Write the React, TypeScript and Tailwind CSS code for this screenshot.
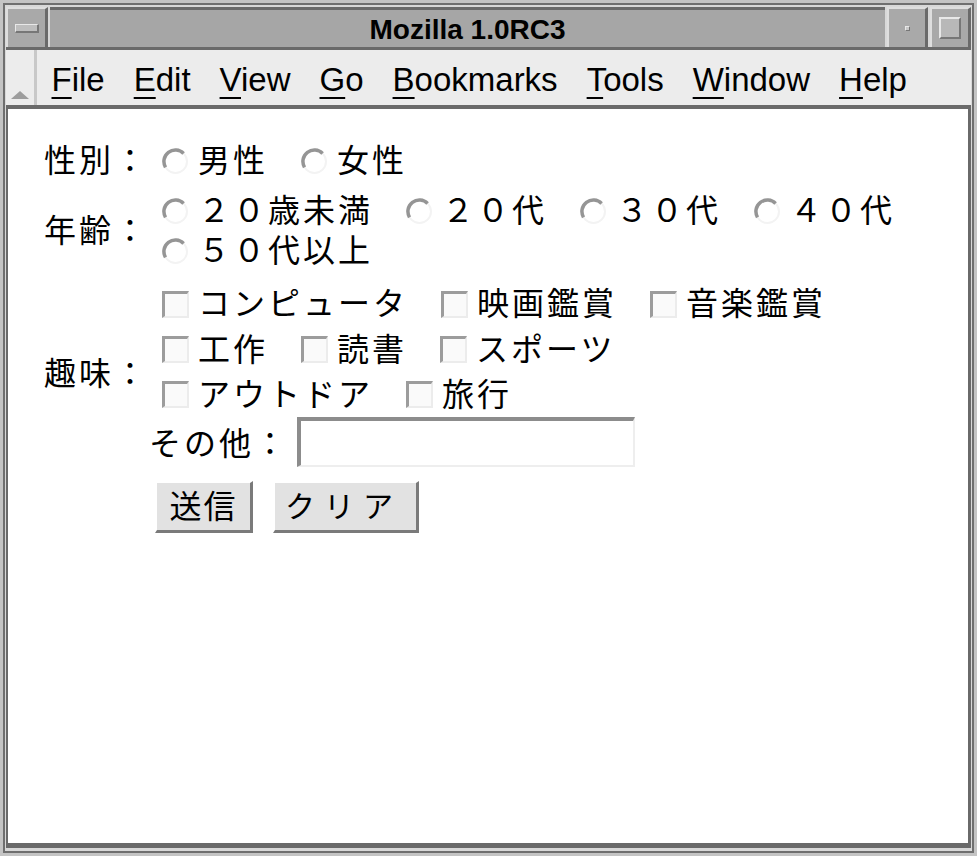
import React from "react";

const fontStack = "font-['Liberation_Sans','Noto_Sans_CJK_JP',sans-serif]";

function Radio() {
    return (
        <svg width="27" height="27" viewBox="0 0 27 27" className="shrink-0">
            <circle cx="13.5" cy="13.5" r="11.5" fill="#ffffff" stroke="#f3f3f3" strokeWidth="2" />
            <path d="M3.5 19.3 A11.5 11.5 0 0 1 21.6 5.4" fill="none" stroke="#959595" strokeWidth="3.5" />
        </svg>
    );
}

function Checkbox() {
    return (
        <span className="box-border block h-[27px] w-[27px] shrink-0 border-t-[3px] border-l-[3px] border-b-2 border-r-2 border-t-[#9c9c9c] border-l-[#9c9c9c] border-b-[#ececec] border-r-[#ececec] bg-[#fafafa]" />
    );
}

function Option({ kind, label, first }: { kind: "radio" | "check"; label: string; first?: boolean }) {
    return (
        <span className={`flex items-center ${first ? "ml-[13px]" : "ml-[33px]"}`}>
            {kind === "radio" ? <Radio /> : <Checkbox />}
            <span className="ml-[9px] tracking-[3px] whitespace-nowrap">{label}</span>
        </span>
    );
}

function OptionRow({ kind, items, h }: { kind: "radio" | "check"; items: string[]; h: string }) {
    return (
        <div className={`flex items-center ${h}`}>
            {items.map((it, i) => (
                <Option key={it} kind={kind} label={it} first={i === 0} />
            ))}
        </div>
    );
}

function MenuItem({ label }: { label: string }) {
    return (
        <span className="px-[14.5px]">
            <span className="underline decoration-2 underline-offset-[6px]">{label[0]}</span>
            {label.slice(1)}
        </span>
    );
}

export default function App() {
    return (
        <div className={`h-[856px] w-[977px] overflow-hidden bg-[#c4c4c4] p-[3px] ${fontStack}`}>
            <div className="flex h-full flex-col border-2 border-[#6f6f6f] bg-[#d8d8d8] px-[1px] pt-[2px] pb-[3px]">
                {/* title bar */}
                <div className="flex h-[43px] shrink-0 border-b-[3px] border-[#6a6a6a]">
                    <div className="flex w-[42px] items-center justify-center border-t-2 border-l-2 border-[#dedede] border-r-[3px] border-r-[#6a6a6a] bg-[#a9a9a9]">
                        <div className="h-[9px] w-[24px] border-t border-l border-[#e8e8e8] border-b-2 border-r-2 border-b-[#777] border-r-[#777] bg-[#bebebe]" />
                    </div>
                    <div className="mx-[2px] flex flex-1 items-center justify-center border-t-[3px] border-[#6a6a6a] bg-[#a6a6a6] pt-[2px] text-[28px] font-bold leading-none text-black">
                        Mozilla 1.0RC3
                    </div>
                    <div className="flex w-[41px] items-center justify-center border-t-2 border-l-2 border-[#dedede] border-r-[3px] border-r-[#6a6a6a] bg-[#a9a9a9]">
                        <div className="h-[5px] w-[5px] border border-[#e8e8e8] border-b-[#777] border-r-[#777] bg-[#c8c8c8]" />
                    </div>
                    <div className="ml-[2px] flex w-[41px] items-center justify-center border-t-2 border-l-2 border-[#dedede] border-r-[3px] border-r-[#6a6a6a] bg-[#a9a9a9]">
                        <div className="h-[22px] w-[22px] border-2 border-t-[#e8e8e8] border-l-[#e8e8e8] border-b-[#777] border-r-[#777] bg-[#b8b8b8]" />
                    </div>
                </div>

                {/* menu bar */}
                <div className="flex h-[59px] shrink-0 border-b-[4px] border-[#6a6a6a] bg-[#ececec]">
                    <div className="flex w-[31px] items-end justify-center border-r-[3px] border-[#c8c8c8] pb-[6px]">
                        <svg width="18" height="8" viewBox="0 0 18 8">
                            <path d="M9 0 L18 8 L0 8 Z" fill="#9d9d9d" />
                        </svg>
                    </div>
                    <div className="flex items-center pt-[3px] text-[33px] leading-none text-black">
                        {["File", "Edit", "View", "Go", "Bookmarks", "Tools", "Window", "Help"].map((m) => (
                            <MenuItem key={m} label={m} />
                        ))}
                    </div>
                </div>

                {/* page content */}
                <div className="flex-1 border-l-2 border-r-[3px] border-b-[5px] border-[#6a6a6a] bg-white pt-[27px] pl-[36px] text-[32px] leading-none text-black">
                    <div className="grid grid-cols-[105px_1fr]">
                        <div className="flex items-center py-[5px] tracking-[3px]">性別：</div>
                        <div className="py-[5px]">
                            <OptionRow kind="radio" h="h-[40px]" items={["男性", "女性"]} />
                        </div>

                        <div className="flex items-center py-[5px] tracking-[3px]">年齢：</div>
                        <div className="py-[5px]">
                            <OptionRow kind="radio" h="h-[40px]" items={["２０歳未満", "２０代", "３０代", "４０代"]} />
                            <OptionRow kind="radio" h="h-[40px]" items={["５０代以上"]} />
                        </div>

                        <div className="flex items-center py-[5px] tracking-[3px]">趣味：</div>
                        <div className="py-[5px]">
                            <OptionRow kind="check" h="h-[46px]" items={["コンピュータ", "映画鑑賞", "音楽鑑賞"]} />
                            <OptionRow kind="check" h="h-[45px]" items={["工作", "読書", "スポーツ"]} />
                            <OptionRow kind="check" h="h-[45px]" items={["アウトドア", "旅行"]} />
                            <div className="flex h-[50px] items-center">
                                <span className="pt-[4px] tracking-[3px]">その他：</span>
                                <input
                                    type="text"
                                    className="ml-[8px] box-border h-[50px] w-[338px] border-t-[4px] border-l-[4px] border-b-2 border-r-2 border-t-[#8c8c8c] border-l-[#8c8c8c] border-b-[#eeeeee] border-r-[#eeeeee] bg-white outline-none"
                                />
                            </div>
                        </div>

                        <div />
                        <div className="flex pt-[9px]">
                            <button className="ml-[6px] box-border h-[52px] w-[98px] border-t-2 border-l-2 border-b-[3px] border-r-[3px] border-t-white border-l-white border-b-[#7a7a7a] border-r-[#7a7a7a] bg-[#e2e2e2] text-[32px] leading-none tracking-[2px] text-black">
                                送信
                            </button>
                            <button className="ml-[20px] box-border h-[52px] w-[146px] border-t-2 border-l-2 border-b-[3px] border-r-[3px] border-t-white border-l-white border-b-[#7a7a7a] border-r-[#7a7a7a] bg-[#e2e2e2] pr-[4px] text-[30px] leading-none tracking-[9px] text-black">
                                クリア
                            </button>
                        </div>
                    </div>
                </div>
            </div>
        </div>
    );
}
